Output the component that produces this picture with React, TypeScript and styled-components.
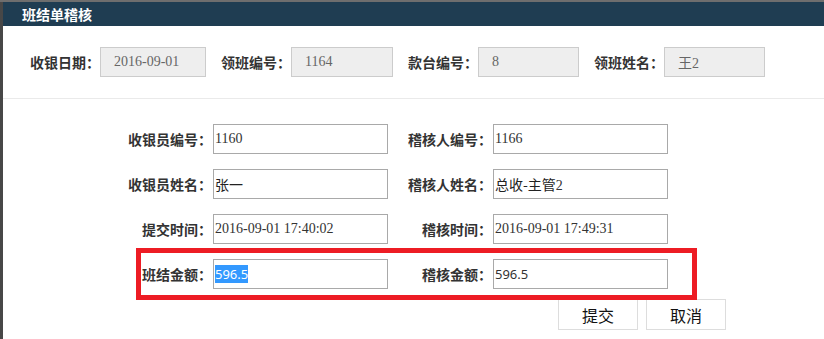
import styled, { createGlobalStyle } from 'styled-components';

const GlobalStyle = createGlobalStyle`
  html, body {
    margin: 0;
    padding: 0;
    background: #ffffff;
  }
  body {
    font-family: "Noto Sans CJK SC", "Noto Sans", sans-serif;
  }
`;

const Page = styled.div`
  position: relative;
  width: 824px;
  height: 339px;
  overflow: hidden;
  background: linear-gradient(to right, #474747, #9a9a9a);
  border-top: 2px solid #6e6e6e;
  box-sizing: border-box;
`;

const Dialog = styled.div`
  margin-left: 3px;
  height: 337px;
  background: #ffffff;
  display: flex;
  flex-direction: column;
`;

const Header = styled.div`
  height: 24px;
  background: #1f3d52;
  color: #ffffff;
  font-size: 14px;
  font-weight: bold;
  line-height: 24px;
  padding-left: 19px;
`;

const TopRow = styled.div`
  display: flex;
  align-items: center;
  gap: 15px;
  padding: 21px 0 21px 27px;
  border-bottom: 1px solid #eaeaea;
`;

const Group = styled.div`
  display: flex;
  align-items: center;
`;

const TopLabel = styled.span`
  width: 70px;
  font-size: 14px;
  font-weight: bold;
  color: #333;
  white-space: nowrap;
`;

const ReadonlyBox = styled.div<{ $w: number }>`
  box-sizing: border-box;
  width: ${({ $w }) => $w}px;
  height: 30px;
  background: #eeeeee;
  border: 1px solid #cccccc;
  padding-left: 13px;
  display: flex;
  align-items: center;
  font-family: "Liberation Serif", "Noto Sans CJK SC", serif;
  font-size: 14px;
  color: #666;
`;

const Form = styled.div`
  display: grid;
  grid-template-columns: 112px 175px 105px 175px;
  row-gap: 15px;
  padding: 25px 0 0 98px;
`;

const FormLabel = styled.span`
  justify-self: end;
  align-self: center;
  font-size: 14px;
  font-weight: bold;
  color: #333;
  white-space: nowrap;
  width: max-content;
  margin-right: 1px;
`;

const Field = styled.div<{ $sans?: boolean }>`
  box-sizing: border-box;
  height: 30px;
  border: 1px solid #a9a9a9;
  padding-left: 1px;
  display: flex;
  align-items: center;
  font-family: ${({ $sans }) =>
    $sans ? '"Noto Sans", "Noto Sans CJK SC", sans-serif' : '"Liberation Serif", "Noto Sans CJK SC", serif'};
  font-size: ${({ $sans }) => ($sans ? '13px' : '14px')};
  color: #333;
  white-space: nowrap;
`;

const Value = styled.span`
  display: inline-block;
`;

const CjkText = styled.span`
  font-family: "Noto Sans CJK SC", sans-serif;
  font-size: 14px;
  color: #222;
`;

const Selected = styled.span`
  background: #3399ff;
  color: #ffffff;
`;

const Buttons = styled.div`
  display: flex;
  gap: 8px;
  padding: 10px 0 0 555px;
`;

const Button = styled.button`
  box-sizing: border-box;
  width: 80px;
  height: 31px;
  background: #ffffff;
  border: 1px solid #dddddd;
  font-family: "Noto Sans CJK SC", sans-serif;
  font-size: 16px;
  color: #111;
  padding: 0;
  cursor: pointer;
`;

const Marker = styled.div`
  position: absolute;
  left: 136px;
  top: 246px;
  width: 561px;
  height: 52px;
  box-sizing: border-box;
  border: 5px solid #ed1c24;
  pointer-events: none;
`;

const topFields = [
  { label: '收银日期：', value: '2016-09-01', w: 106 },
  { label: '领班编号：', value: '1164', w: 102 },
  { label: '款台编号：', value: '8', w: 101 },
  { label: '领班姓名：', value: '王2', w: 101 },
];

export default function App() {
  return (
    <>
      <GlobalStyle />
      <Page>
        <Dialog>
          <Header>班结单稽核</Header>
          <TopRow>
            {topFields.map((f) => (
              <Group key={f.label}>
                <TopLabel>{f.label}</TopLabel>
                <ReadonlyBox $w={f.w}>{f.value}</ReadonlyBox>
              </Group>
            ))}
          </TopRow>
          <Form>
            <FormLabel>收银员编号：</FormLabel>
            <Field>1160</Field>
            <FormLabel>稽核人编号：</FormLabel>
            <Field>1166</Field>

            <FormLabel>收银员姓名：</FormLabel>
            <Field><CjkText>张一</CjkText></Field>
            <FormLabel>稽核人姓名：</FormLabel>
            <Field><Value><CjkText>总收-主管</CjkText>2</Value></Field>

            <FormLabel>提交时间：</FormLabel>
            <Field>2016-09-01 17:40:02</Field>
            <FormLabel>稽核时间：</FormLabel>
            <Field>2016-09-01 17:49:31</Field>

            <FormLabel>班结金额：</FormLabel>
            <Field $sans><Selected>596.5</Selected></Field>
            <FormLabel>稽核金额：</FormLabel>
            <Field $sans>596.5</Field>
          </Form>
          <Buttons>
            <Button>提交</Button>
            <Button>取消</Button>
          </Buttons>
        </Dialog>
        <Marker />
      </Page>
    </>
  );
}
